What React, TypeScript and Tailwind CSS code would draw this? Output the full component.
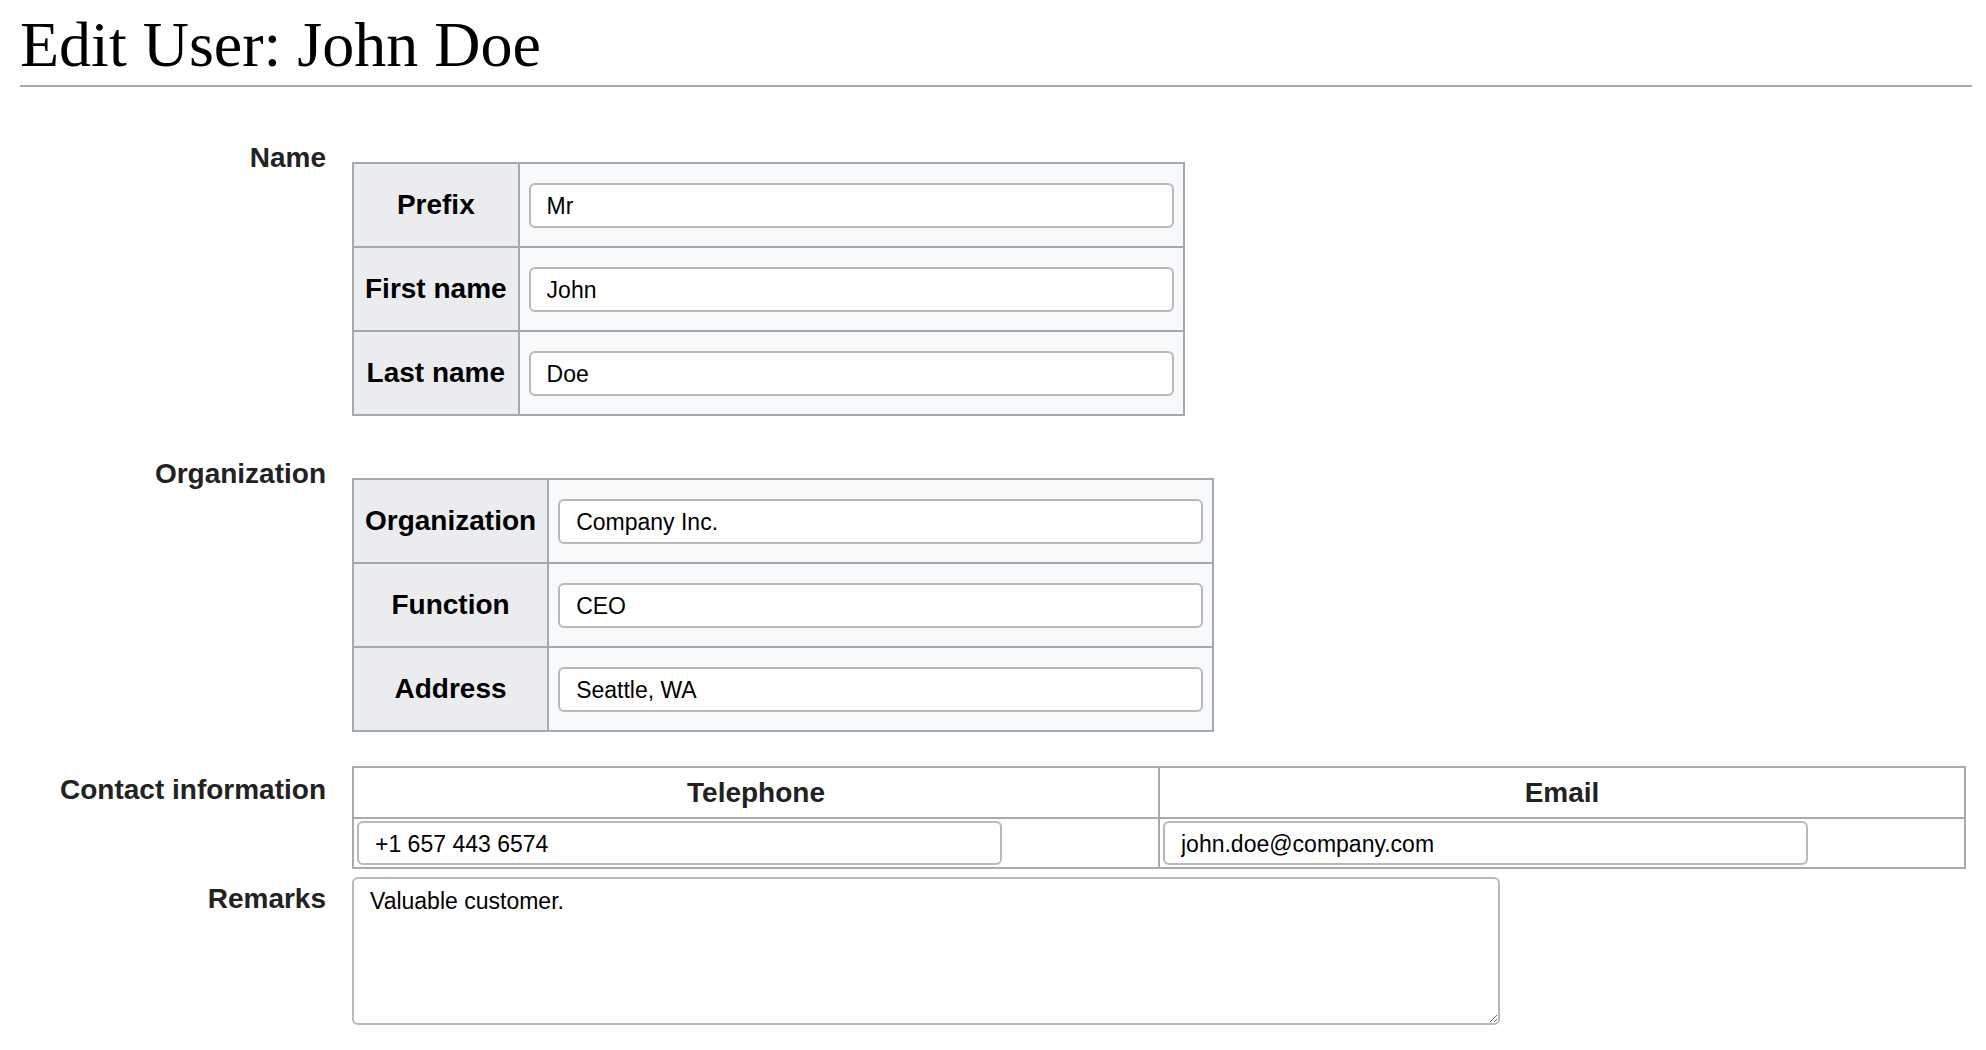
import React from "react";

const inputCls =
  "block w-[645px] h-[45px] border-2 border-[#b8b8b8] rounded-[6px] bg-white px-[16px] pt-[3px] text-[23px] text-black font-['Liberation_Sans',Arial,sans-serif] outline-none";

const thCls =
  "border-2 border-[#a2a9b1] bg-[#eaecf0] px-[11px] py-[18.5px] text-[28px] leading-[32px] font-bold text-black text-center whitespace-nowrap";
const tdCls = "border-2 border-[#a2a9b1] bg-[#f8f9fa] px-[9px] py-[18.5px]";

function Label({ children }: { children: React.ReactNode }) {
  return (
    <div className="text-right pt-[8px] text-[28px] leading-[32px] font-bold text-[#222222] whitespace-nowrap">
      {children}
    </div>
  );
}

function KVTable({ rows }: { rows: [string, string][] }) {
  return (
    <table className="border-collapse border-2 border-[#a2a9b1] my-[28px]">
      <tbody>
        {rows.map(([k, v]) => (
          <tr key={k}>
            <th className={thCls}>{k}</th>
            <td className={tdCls}>
              <input className={inputCls} defaultValue={v} />
            </td>
          </tr>
        ))}
      </tbody>
    </table>
  );
}

const contactInput =
  "block w-[645px] h-[44px] border-2 border-[#b8b8b8] rounded-[6px] bg-white px-[16px] pt-[3px] text-[23px] text-black outline-none font-['Liberation_Sans',Arial,sans-serif]";

export default function App() {
  return (
    <div className="min-h-screen bg-white px-[20px] font-['Liberation_Sans',Arial,sans-serif]">
      <h1 className="mr-[-6px] pt-[4px] text-[64px] leading-[81px] font-normal text-black font-['Liberation_Serif','Times_New_Roman',serif] border-b-2 border-[#a2a9b1]">
        Edit User: John Doe
      </h1>
      <div className="mt-[47px] grid grid-cols-[306px_1fr] gap-x-[26px] gap-y-[6px]">
        <Label>Name</Label>
        <div>
          <KVTable
            rows={[
              ["Prefix", "Mr"],
              ["First name", "John"],
              ["Last name", "Doe"],
            ]}
          />
        </div>

        <Label>Organization</Label>
        <div>
          <KVTable
            rows={[
              ["Organization", "Company Inc."],
              ["Function", "CEO"],
              ["Address", "Seattle, WA"],
            ]}
          />
        </div>

        <Label>Contact information</Label>
        <div>
          <table className="w-full table-fixed border-collapse border-2 border-[#aaaaaa]">
            <thead>
              <tr>
                <th className="border-2 border-[#aaaaaa] py-[8.5px] text-[28px] leading-[32px] font-bold text-[#222222] text-center">
                  Telephone
                </th>
                <th className="border-2 border-[#aaaaaa] py-[8.5px] text-[28px] leading-[32px] font-bold text-[#222222] text-center">
                  Email
                </th>
              </tr>
            </thead>
            <tbody>
              <tr>
                <td className="border-2 border-[#aaaaaa] px-[3px] py-[2px]">
                  <input className={contactInput} defaultValue="+1 657 443 6574" />
                </td>
                <td className="border-2 border-[#aaaaaa] px-[3px] py-[2px]">
                  <input className={contactInput} defaultValue="john.doe@company.com" />
                </td>
              </tr>
            </tbody>
          </table>
        </div>

        <Label>Remarks</Label>
        <div className="pt-[2px]">
          <textarea
            className="block w-[1148px] h-[148px] border-2 border-[#b8b8b8] rounded-[6px] bg-white px-[16px] pt-[9px] text-[23px] leading-[26px] text-black outline-none font-['Liberation_Sans',Arial,sans-serif]"
            defaultValue="Valuable customer."
          />
        </div>
      </div>
    </div>
  );
}
